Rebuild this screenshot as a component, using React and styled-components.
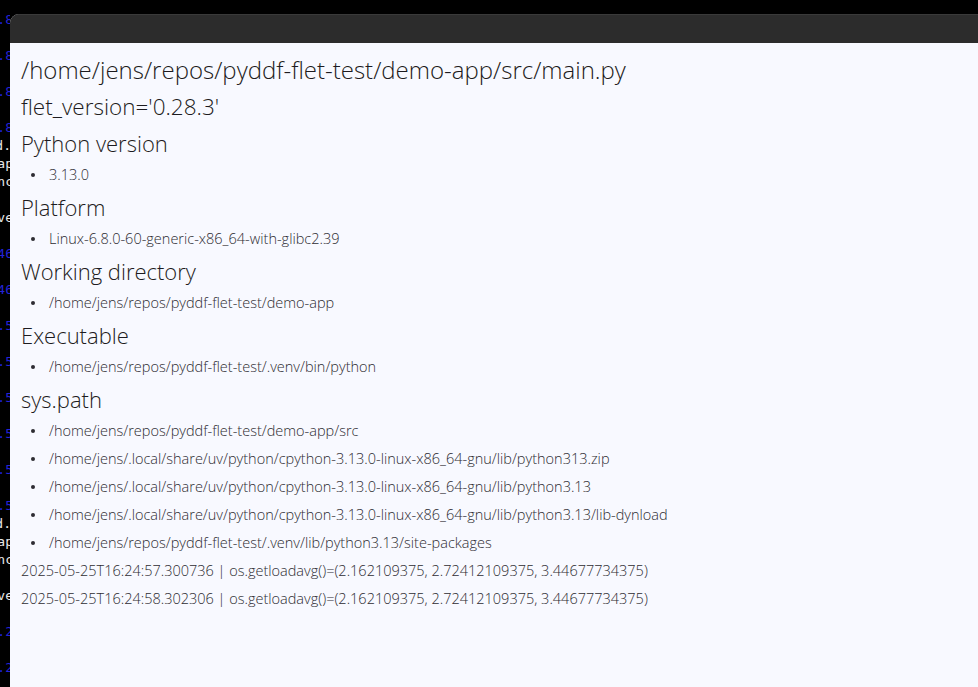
import React from "react";
import styled, { createGlobalStyle } from "styled-components";

const GlobalStyle = createGlobalStyle`
  html, body {
    margin: 0;
    padding: 0;
    background: #000;
    overflow: hidden;
  }
`;

const terminalLines = [
  { text: "0.8", color: "#2323d8", cut: 3 },
  {},
  { text: "0.8", color: "#2323d8", cut: 3 },
  {},
  { text: "0.8", color: "#2323d8", cut: 3 },
  {},
  { text: "0.8", color: "#2323d8", cut: 3 },
  { text: "ld.", color: "#e8e8e8", cut: 1 },
  { text: "map", color: "#e8e8e8", cut: 3 },
  { text: "inc", color: "#e8e8e8", cut: 3 },
  {},
  { text: "ave", color: "#e8e8e8", cut: 3 },
  {},
  { text: "546", color: "#2323d8", cut: 3 },
  {},
  { text: "546", color: "#2323d8", cut: 3 },
  {},
  { text: "0.5", color: "#2323d8", cut: 3 },
  {},
  { text: "0.5", color: "#2323d8", cut: 3 },
  {},
  { text: "0.5", color: "#2323d8", cut: 3 },
  {},
  { text: "0.5", color: "#2323d8", cut: 3 },
  {},
  { text: "0.5", color: "#2323d8", cut: 3 },
  {},
  { text: "0.5", color: "#2323d8", cut: 3 },
  { text: "ld.", color: "#e8e8e8", cut: 1 },
  { text: "map", color: "#e8e8e8", cut: 3 },
  { text: "inc", color: "#e8e8e8", cut: 3 },
  {},
  { text: "ave", color: "#e8e8e8", cut: 3 },
  {},
  { text: "0.2", color: "#2323d8", cut: 3 },
  {},
  { text: "0.2", color: "#2323d8", cut: 3 },
  {},
];

const sections = [
  { title: "Python version", items: ["3.13.0"] },
  { title: "Platform", items: ["Linux-6.8.0-60-generic-x86_64-with-glibc2.39"] },
  { title: "Working directory", items: ["/home/jens/repos/pyddf-flet-test/demo-app"] },
  { title: "Executable", items: ["/home/jens/repos/pyddf-flet-test/.venv/bin/python"] },
  {
    title: "sys.path",
    items: [
      "/home/jens/repos/pyddf-flet-test/demo-app/src",
      "/home/jens/.local/share/uv/python/cpython-3.13.0-linux-x86_64-gnu/lib/python313.zip",
      "/home/jens/.local/share/uv/python/cpython-3.13.0-linux-x86_64-gnu/lib/python3.13",
      "/home/jens/.local/share/uv/python/cpython-3.13.0-linux-x86_64-gnu/lib/python3.13/lib-dynload",
      "/home/jens/repos/pyddf-flet-test/.venv/lib/python3.13/site-packages",
    ],
  },
];

const logLines = [
  "2025-05-25T16:24:57.300736 | os.getloadavg()=(2.162109375, 2.72412109375, 3.44677734375)",
  "2025-05-25T16:24:58.302306 | os.getloadavg()=(2.162109375, 2.72412109375, 3.44677734375)",
];

const Desktop = styled.div`
  display: flex;
  width: 100vw;
  height: 100vh;
  background: #000;
`;

const Terminal = styled.div`
  width: 10px;
  flex: none;
  overflow: hidden;
  padding-top: 11px;
`;

const TermLine = styled.div`
  height: 18px;
  line-height: 18px;
  display: flex;
  justify-content: flex-end;
  white-space: nowrap;
  font-family: "DejaVu Sans Mono", monospace;
  font-size: 13px;
  color: ${(p) => p.$color || "#e8e8e8"};

  span {
    margin-right: -${(p) => p.$cut || 0}px;
  }
`;

const Window = styled.div`
  flex: 1;
  margin-top: 14px;
  display: flex;
  flex-direction: column;
  border-top-left-radius: 9px;
  overflow: hidden;
  background: #f8f9ff;
`;

const TitleBar = styled.div`
  height: 29px;
  flex: none;
  background: #2c2c2c;
  border-top: 1px solid #3a3a3a;
  box-sizing: border-box;
`;

const Content = styled.div`
  flex: 1;
  padding: 8px 11px 0;
  display: flex;
  flex-direction: column;
  font-family: "Open Sans", "Noto Sans", sans-serif;
  font-weight: 300;
  color: #1d1b20;
`;

const PageTitle = styled.div`
  font-size: 24px;
  line-height: 38px;
  white-space: nowrap;
`;

const Heading = styled.div`
  font-size: ${(p) => (p.$large ? "22.5px" : "22px")};
  line-height: 36px;
  white-space: nowrap;
`;

const Line = styled.div`
  font-size: 14.5px;
  line-height: 28px;
  white-space: nowrap;
  color: #2e2c32;
`;

const Item = styled(Line)`
  display: flex;
  align-items: center;
  padding-left: 10px;

  &::before {
    content: "";
    width: 4px;
    height: 4px;
    border-radius: 50%;
    background: #2e2c32;
    margin-right: 14px;
  }
`;

export default function App() {
  return (
    <>
      <GlobalStyle />
      <Desktop>
        <Terminal>
          {terminalLines.map((l, i) => (
            <TermLine key={i} $color={l.color} $cut={l.cut}>
              <span>{l.text || ""}</span>
            </TermLine>
          ))}
        </Terminal>
        <Window>
          <TitleBar />
          <Content>
            <PageTitle>/home/jens/repos/pyddf-flet-test/demo-app/src/main.py</PageTitle>
            <Heading $large>flet_version='0.28.3'</Heading>
            {sections.map((s) => (
              <React.Fragment key={s.title}>
                <Heading>{s.title}</Heading>
                {s.items.map((it) => (
                  <Item key={it}>{it}</Item>
                ))}
              </React.Fragment>
            ))}
            {logLines.map((l) => (
              <Line key={l}>{l}</Line>
            ))}
          </Content>
        </Window>
      </Desktop>
    </>
  );
}
